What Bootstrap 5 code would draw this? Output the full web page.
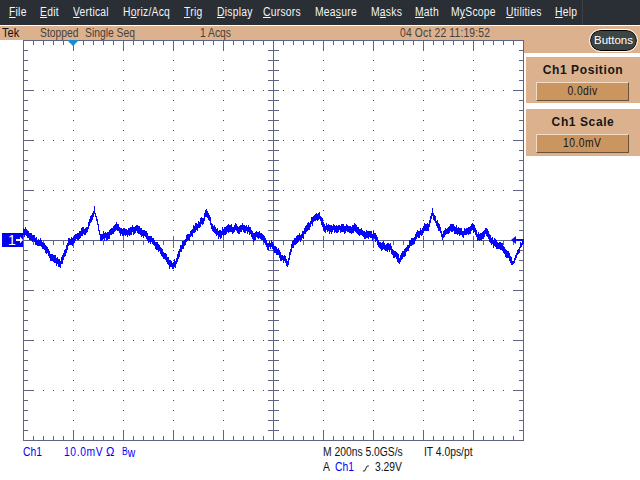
<!DOCTYPE html>
<html lang="en">
<head>
<meta charset="utf-8">
<title>Tek scope</title>
<link href="https://cdn.jsdelivr.net/npm/bootstrap@5.3.0/dist/css/bootstrap.min.css" rel="stylesheet">
<style>
html,body{margin:0;width:640px;height:480px;overflow:hidden;background:#fff;font-family:"Liberation Sans",Arial,sans-serif;}
.scope-root{width:640px;height:480px;position:relative;}
.menu-strip{height:25px;background:#2a2f35;color:#f4f4f4;font-size:12px;line-height:25px;position:relative;margin-bottom:1px;}
.menu-strip::after{content:"";position:absolute;left:582px;top:0;bottom:0;width:1px;background:#3c4247;}
.menu-item{position:absolute;top:0;letter-spacing:.3px;white-space:nowrap;transform:scaleX(.86);transform-origin:left center;}
.status-strip{height:14px;background:#dcb18e;color:#45403a;font-size:12px;line-height:14px;position:relative;}
.status-cell{position:absolute;top:0;white-space:nowrap;transform:scaleX(.86);transform-origin:left center;}
.status-date{letter-spacing:.2px;}
.status-tek{color:#111;transform:scaleX(.92);}
.pill-btn{position:absolute;left:590px;top:30px;width:47px;height:21px;background:#3d4444;border:1px solid #000;outline:1px solid #fff;border-radius:11px;color:#fff;font-size:11.500px;line-height:19px;text-align:center;}
.main-row{height:440px;}
.scope-plot{display:block;width:524px;height:402px;flex:none;}
.side-col{width:116px;flex:none;}
.side-head{height:13px;background:#dcb18e;margin-bottom:4px;}
.knob-card{margin-left:2px;width:114px;background:#dcb18e;text-align:center;color:#161616;}
.knob-a{height:46px;margin-bottom:6px;}
.knob-b{height:47px;}
.knob-title{font-size:12px;font-weight:700;letter-spacing:.6px;line-height:14px;padding-top:6px;height:25px;}
.knob-value{margin:0 11px 0 10px;height:19px;background:#cb9560;font-size:12px;line-height:17px;border:1px solid;border-color:#f1dcc7 #6b5138 #6b5138 #f1dcc7;}
.knob-text{display:inline-block;transform:scaleX(.86);letter-spacing:.5px;}
.read-row{position:relative;height:38px;color:#111;font-size:12px;}
.read-item{position:absolute;white-space:nowrap;line-height:14px;transform:scaleX(.86);transform-origin:left center;}
.read-wide{letter-spacing:.7px;}
.read-blue{color:#0000ff;}
.read-top{top:3px;}
.read-bot{top:18px;}
.omega-mark{font-size:13px;}
.bw-mark{font-size:12px;}
.bw-up{font-size:10px;vertical-align:2px;}
.slope-mark{display:inline-block;width:9px;height:10px;}
</style>
</head>
<body>
<div class="scope-root">
  <div class="menu-strip">
    <span class="menu-item" style="left:9px"><u>F</u>ile</span>
    <span class="menu-item" style="left:40px"><u>E</u>dit</span>
    <span class="menu-item" style="left:73px"><u>V</u>ertical</span>
    <span class="menu-item" style="left:123px">H<u>o</u>riz/Acq</span>
    <span class="menu-item" style="left:184px"><u>T</u>rig</span>
    <span class="menu-item" style="left:217px"><u>D</u>isplay</span>
    <span class="menu-item" style="left:263px"><u>C</u>ursors</span>
    <span class="menu-item" style="left:315px">Mea<u>s</u>ure</span>
    <span class="menu-item" style="left:371px">M<u>a</u>sks</span>
    <span class="menu-item" style="left:415px"><u>M</u>ath</span>
    <span class="menu-item" style="left:451px">M<u>y</u>Scope</span>
    <span class="menu-item" style="left:506px"><u>U</u>tilities</span>
    <span class="menu-item" style="left:555px"><u>H</u>elp</span>
  </div>
  <div class="status-strip">
    <span class="status-cell status-tek" style="left:2px">Tek</span>
    <span class="status-cell" style="left:40px">Stopped</span>
    <span class="status-cell" style="left:85px">Single Seq</span>
    <span class="status-cell" style="left:200px">1 Acqs</span>
    <span class="status-cell status-date" style="left:400px">04 Oct 22 11:19:52</span>
  </div>
  <div class="pill-btn">Buttons</div>
  <div class="d-flex main-row">
    <div>
      <svg class="scope-plot" id="plot" viewBox="0 40 524 402" shape-rendering="crispEdges"></svg>
      <div class="read-row">
        <span class="read-item read-top read-blue" style="left:23px">Ch1</span>
        <span class="read-item read-top read-blue read-wide" style="left:64px">10.0mV</span>
        <span class="read-item read-top read-blue omega-mark" style="left:106px">Ω</span>
        <span class="read-item read-top read-blue bw-mark" style="left:122px"><span class="bw-up">B</span>w</span>
        <span class="read-item read-top" style="left:323px">M 200ns 5.0GS/s</span>
        <span class="read-item read-top" style="left:424px">IT 4.0ps/pt</span>
        <span class="read-item read-bot" style="left:323px">A</span>
        <span class="read-item read-bot read-blue" style="left:335px">Ch1</span>
        <span class="read-item read-bot" style="left:362px"><svg class="slope-mark" viewBox="0 0 9 10"><path d="M1 8H3L6 3H8" fill="none" stroke="#111"/></svg></span>
        <span class="read-item read-bot" style="left:375px">3.29V</span>
      </div>
    </div>
    <div class="side-col">
      <div class="side-head"></div>
      <div class="knob-card knob-a">
        <div class="knob-title">Ch1 Position</div>
        <div class="knob-value"><span class="knob-text">0.0div</span></div>
      </div>
      <div class="knob-card knob-b">
        <div class="knob-title">Ch1 Scale</div>
        <div class="knob-value"><span class="knob-text">10.0mV</span></div>
      </div>
    </div>
  </div>
</div>
<script>
(function(){
  var GRID="#5f6384", DOT="#4a4d60", BLUE="#0808f8";
  var s=[];
  function hl(x1,x2,y,c){s.push('<rect x="'+x1+'" y="'+y+'" width="'+(x2-x1+1)+'" height="1" fill="'+c+'"/>');}
  function vl(x,y1,y2,c){s.push('<rect x="'+x+'" y="'+y1+'" width="1" height="'+(y2-y1+1)+'" fill="'+c+'"/>');}
  var x,y;
  for(x=73;x<=473;x+=50){ for(y=50;y<=430;y+=10){ if(x!==273) vl(x,y,y,DOT);} }
  for(y=90;y<=390;y+=50){ for(x=33;x<=513;x+=10){ if(y!==240) vl(x,y,y,DOT);} }
  hl(23,523,40,GRID);hl(23,523,440,GRID);vl(23,40,440,GRID);vl(523,40,440,GRID);
  hl(23,523,240,GRID);vl(273,40,440,GRID);
  for(x=33;x<=513;x+=10){
    var maj=(x-23)%50===0;
    var len=maj?10:4;
    vl(x,41,40+len,GRID);vl(x,440-len,439,GRID);
    if(x!==273){vl(x,maj?236:241,maj?247:244,GRID);}
  }
  for(y=50;y<=430;y+=10){
    var maj2=(y-40)%50===0;
    var l2=maj2?10:4;
    hl(24,23+l2,y,GRID);hl(523-l2,522,y,GRID);
    if(y!==240){hl(268,278,y,GRID);}
  }
  var P=[[23,230],[33,238],[43,245],[50,255],[60,264],[68,243],[77,236],[87,228],[94,209],[100,236],[108,235],[115,227],[125,232],[137,228],[147,237],[155,243],[163,254],[173,267],[183,243],[193,230],[203,219],[206,211],[213,229],[220,234],[227,228],[247,228],[253,235],[260,235],[267,244],[273,247],[280,255],[287,263],[293,242],[300,237],[307,227],[316,216],[320,218],[325,228],[343,228],[357,229],[362,233],[373,235],[380,245],[390,248],[399,260],[410,243],[423,228],[428,226],[432,212],[438,228],[442,234],[452,227],[463,233],[472,228],[480,238],[485,230],[493,243],[503,248],[513,263],[520,245],[523,243]];
  var seed=12345;function rnd(){seed=(seed*1103515245+12345)&0x7fffffff;return seed/0x7fffffff;}
  function at(px){for(var i=0;i<P.length-1;i++){if(px<=P[i+1][0]){var t=(px-P[i][0])/(P[i+1][0]-P[i][0]);return P[i][1]+t*(P[i+1][1]-P[i][1]);}}return 243;}
  var prevTop=null,prevBot=null,d='';
  for(x=23;x<=523;x++){
    var c=at(x)+(rnd()-.5)*2.4+Math.sin(x*.9)*.8;
    var thin=(x>=95&&x<=100)||(x>=512&&x<=523);
    var sp=thin?1:2.2;
    var t=Math.round(c-sp-rnd()*1.8),b=Math.round(c+sp+rnd()*1.8);
    if(prevTop!==null){ if(t>prevBot) t=prevBot; if(b<prevTop) b=prevTop; }
    d+='M'+x+' '+t+'V'+(b+1)+'H'+(x+1)+'V'+t+'Z';
    prevTop=t;prevBot=b;
  }
  s.push('<path d="'+d+'" fill="'+BLUE+'"/>');
  s.push('<path d="M67 40H79L73 46Z" fill="#1a8ad4" shape-rendering="auto"/>');
  s.push('<rect x="2" y="233" width="21" height="14" fill="#0000ee"/>');
  s.push('<text x="8" y="245" fill="#fff" font-family="Liberation Sans" font-size="14">1</text>');
  s.push('<path d="M16 239H20V236.500L23 240L20 243.500V241H16Z" fill="#fff" shape-rendering="auto"/>');
  s.push('<path d="M511 240L516 236V239H523V241H516V244Z" fill="'+BLUE+'" shape-rendering="auto"/>');
  document.getElementById('plot').innerHTML=s.join('');
})();
</script>
<script src="https://cdn.jsdelivr.net/npm/bootstrap@5.3.0/dist/js/bootstrap.bundle.min.js"></script>
</body>
</html>
